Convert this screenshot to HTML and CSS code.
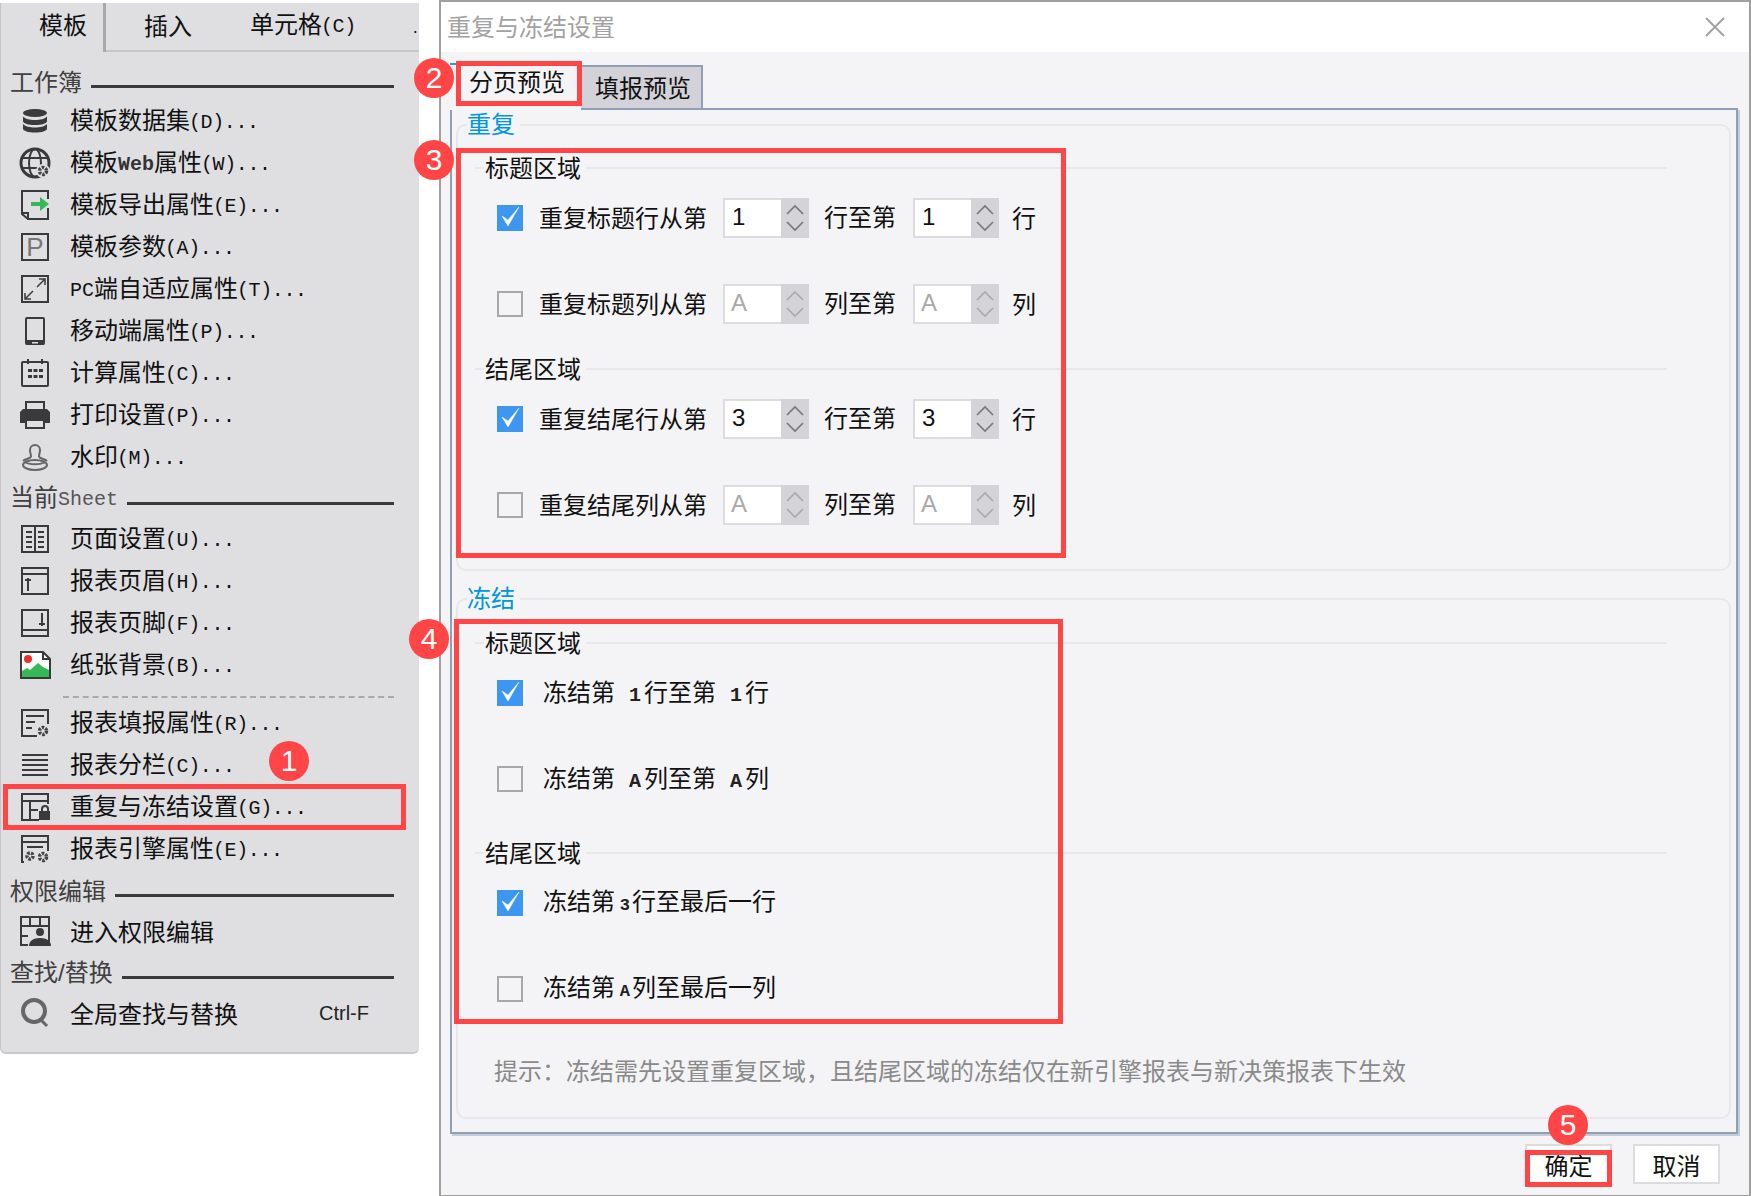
FILE: index.html
```html
<!DOCTYPE html>
<html lang="zh-CN">
<head>
<meta charset="utf-8">
<title>重复与冻结设置</title>
<link rel="stylesheet" href="styles.css">
</head>
<body>
<div class="desk">
  <nav class="menu">
    <div class="menu-tabs">
      <div class="tab tab-on">模板</div>
      <div class="tab tab-a">插入</div>
      <div class="tab tab-b">单元格<span class="lat">(C)</span></div>
      <div class="tab tab-c">.</div>
    </div>

    <div class="head head-first"><span>工作簿</span><i></i></div>
    <div class="item"><svg class="ico" viewBox="0 0 32 32"><ellipse class="fd" cx="16" cy="8" rx="12" ry="4"/><path class="fd" d="M4 11.5c2 2.5 7 3.5 12 3.5s10-1 12-3.5V16c0 2.500-5.400 4-12 4S4 18.500 4 16z"/><path class="fd" d="M4 19c2 2.500 7 3.500 12 3.500s10-1 12-3.500v4.500c0 2.500-5.400 4-12 4s-12-1.500-12-4z"/></svg><span>模板数据集<span class="lat">(D)...</span></span></div>
    <div class="item"><svg class="ico" viewBox="0 0 32 32"><circle class="ln ln3" cx="16" cy="16" r="14"/><ellipse class="ln" cx="16" cy="16" rx="6" ry="14"/><path class="ln" d="M3 11h26M3 21h16"/><circle class="bg" cx="24" cy="24" r="7"/><circle class="gear" cx="24" cy="24" r="3.500"/></svg><span>模板<span class="lat lat-b">Web</span>属性<span class="lat">(W)...</span></span></div>
    <div class="item"><svg class="ico" viewBox="0 0 32 32"><path class="ln" d="M29 10V2H3v23l6 5h20V19"/><path class="ln" d="M3 24h6v6"/><path class="grn" d="M12 13h9V8l9 7-9 7v-5h-9z"/></svg><span>模板导出属性<span class="lat">(E)...</span></span></div>
    <div class="item"><svg class="ico" viewBox="0 0 32 32"><rect class="ln" x="3" y="3" width="26" height="26"/><text class="ico-t" x="16" y="25">P</text></svg><span>模板参数<span class="lat">(A)...</span></span></div>
    <div class="item"><svg class="ico" viewBox="0 0 32 32"><rect class="ln" x="3" y="3" width="26" height="26"/><path class="ln thin" d="M18 14l8-8M20 6h6v6M14 18l-8 8M6 20v6h6"/></svg><span><span class="lat lat-p">PC</span>端自适应属性<span class="lat">(T)...</span></span></div>
    <div class="item"><svg class="ico" viewBox="0 0 32 32"><rect class="ln" x="7" y="3" width="18" height="26" rx="1"/><rect class="fd" x="7" y="25" width="18" height="5"/><rect class="bg" x="13" y="27" width="6" height="1.500"/></svg><span>移动端属性<span class="lat">(P)...</span></span></div>
    <div class="item"><svg class="ico" viewBox="0 0 32 32"><rect class="ln" x="3" y="5" width="26" height="24" rx="1"/><path class="ln" d="M9 2v5M23 2v5"/><path class="fd" d="M9 12h4v3H9zM14.500 12h4v3h-4zM20 12h4v3h-4zM9 18h4v3H9zM14.500 18h4v3h-4zM20 18h4v3h-4z"/></svg><span>计算属性<span class="lat">(C)...</span></span></div>
    <div class="item"><svg class="ico" viewBox="0 0 32 32"><path class="ln" d="M7 11V3h18v8"/><path class="fd" d="M1 13l3-3h24l3 3v11h-6v-4H7v4H1z"/><rect class="ln" x="7" y="21" width="18" height="8"/></svg><span>打印设置<span class="lat">(P)...</span></span></div>
    <div class="item"><svg class="ico" viewBox="0 0 32 32"><path class="ln g" d="M12 16c0-3-1-4-1-7a5 5 0 0 1 10 0c0 3-1 4-1 7"/><path class="ln g" d="M12 16c-2 2-6 2-8 4M20 16c2 2 6 2 8 4"/><ellipse class="ln g" cx="16" cy="24" rx="12" ry="5"/><path class="ln g" d="M6 21c4 3 16 3 20 0"/></svg><span>水印<span class="lat">(M)...</span></span></div>

    <div class="head"><span>当前<span class="lat lat-h">Sheet</span></span><i></i></div>
    <div class="item"><svg class="ico" viewBox="0 0 32 32"><rect class="ln" x="3" y="3" width="26" height="26"/><path class="ln" d="M16 3v26M7 9h6M7 14h6M7 19h6M7 24h6M19 9h6M19 14h6M19 19h6M19 24h6"/></svg><span>页面设置<span class="lat">(U)...</span></span></div>
    <div class="item"><svg class="ico" viewBox="0 0 32 32"><rect class="ln" x="3" y="3" width="26" height="26"/><path class="ln" d="M3 9h26M9 26V13M6 15h6"/></svg><span>报表页眉<span class="lat">(H)...</span></span></div>
    <div class="item"><svg class="ico" viewBox="0 0 32 32"><rect class="ln" x="3" y="3" width="26" height="26"/><path class="ln" d="M3 23h26M23 6v13M20 17h6"/></svg><span>报表页脚<span class="lat">(F)...</span></span></div>
    <div class="item"><svg class="ico" viewBox="0 0 32 32"><path class="wht" d="M2 3h22l7 7v19H2z"/><path class="ln" d="M2 3h22l7 7v19H2zM24 3v7h7"/><path class="grn" d="M3 28v-6l5-3 3 2 8-7 5 4 6 3v7z"/><circle class="red" cx="9" cy="10" r="4"/></svg><span>纸张背景<span class="lat">(B)...</span></span></div>

    <div class="sep"></div>

    <div class="item"><svg class="ico" viewBox="0 0 32 32"><path class="ln" d="M18 29H3V3h26v14"/><path class="ln" d="M7 9h18M7 15h9M7 21h6"/><circle class="gear" cx="24" cy="24" r="3.500"/></svg><span>报表填报属性<span class="lat">(R)...</span></span></div>
    <div class="item"><svg class="ico" viewBox="0 0 32 32"><path class="ln" d="M3 6h26M3 11h26M3 16h26M3 21h26M3 26h26"/></svg><span>报表分栏<span class="lat">(C)...</span></span></div>
    <div class="item"><svg class="ico" viewBox="0 0 32 32"><path class="ln" d="M29 13V3H3v26h17"/><path class="ln" d="M3 10h26M11 10v19M11 19h8"/><path class="ln" d="M23 20v-2a3 3 0 0 1 6 0v2"/><rect class="fd" x="20" y="20" width="11" height="9"/></svg><span>重复与冻结设置<span class="lat">(G)...</span></span></div>
    <div class="item"><svg class="ico" viewBox="0 0 32 32"><path class="ln" d="M5 29H3V3h26v15"/><path class="ln" d="M3 9h26M8 14h16"/><circle class="gear" cx="11" cy="23" r="3"/><circle class="gear" cx="24" cy="24" r="3.500"/></svg><span>报表引擎属性<span class="lat">(E)...</span></span></div>

    <div class="head"><span>权限编辑</span><i></i></div>
    <div class="item"><svg class="ico" viewBox="0 0 32 32"><path class="ln" d="M9 30H2V2h28v28M2 11h28M2 21h7M11 2v9M21 2v9"/><circle class="fd" cx="21" cy="17" r="4"/><path class="fd" d="M10 31c0-5 4-8 11-8s11 3 11 8z"/></svg><span>进入权限编辑</span></div>

    <div class="head"><span>查找<span class="lat lat-s">/</span>替换</span><i></i></div>
    <div class="item item-last"><svg class="ico" viewBox="0 0 32 32"><circle class="ln ln4 g" cx="15" cy="14" r="11"/><path class="ln ln3 g" d="M22 23l6 6"/></svg><span class="grow">全局查找与替换</span><span class="key">Ctrl-F</span></div>
  </nav>

  <section class="dialog">
    <header class="title"><span>重复与冻结设置</span>
      <svg class="close" viewBox="0 0 20 20"><path d="M1 1l18 18M19 1L1 19"/></svg>
    </header>
    <div class="body">
      <div class="dtabs">
        <div class="dtab dtab-on">分页预览</div>
        <div class="dtab">填报预览</div>
      </div>
      <div class="pane">
        <fieldset class="group">
          <legend>重复</legend>
          <div class="sub">
            <div class="sub-head"><span>标题区域</span></div>
            <div class="row">
              <span class="box on"><svg viewBox="0 0 26 26"><path d="M5 11l6 10L22 2 11 15z"/></svg></span>
              <span class="lab">重复标题行从第</span>
              <span class="spin"><span class="val">1</span><span class="arrows"><svg viewBox="0 0 26 36"><path d="M5 14l8-8 8 8M5 22l8 8 8-8"/></svg></span></span>
              <span class="to">行至第</span>
              <span class="spin"><span class="val">1</span><span class="arrows"><svg viewBox="0 0 26 36"><path d="M5 14l8-8 8 8M5 22l8 8 8-8"/></svg></span></span>
              <span class="tail">行</span>
            </div>
            <div class="row">
              <span class="box"></span>
              <span class="lab">重复标题列从第</span>
              <span class="spin off"><span class="val">A</span><span class="arrows"><svg viewBox="0 0 26 36"><path d="M5 14l8-8 8 8M5 22l8 8 8-8"/></svg></span></span>
              <span class="to">列至第</span>
              <span class="spin off"><span class="val">A</span><span class="arrows"><svg viewBox="0 0 26 36"><path d="M5 14l8-8 8 8M5 22l8 8 8-8"/></svg></span></span>
              <span class="tail">列</span>
            </div>
          </div>
          <div class="sub sub-2">
            <div class="sub-head"><span>结尾区域</span></div>
            <div class="row">
              <span class="box on"><svg viewBox="0 0 26 26"><path d="M5 11l6 10L22 2 11 15z"/></svg></span>
              <span class="lab">重复结尾行从第</span>
              <span class="spin"><span class="val">3</span><span class="arrows"><svg viewBox="0 0 26 36"><path d="M5 14l8-8 8 8M5 22l8 8 8-8"/></svg></span></span>
              <span class="to">行至第</span>
              <span class="spin"><span class="val">3</span><span class="arrows"><svg viewBox="0 0 26 36"><path d="M5 14l8-8 8 8M5 22l8 8 8-8"/></svg></span></span>
              <span class="tail">行</span>
            </div>
            <div class="row">
              <span class="box"></span>
              <span class="lab">重复结尾列从第</span>
              <span class="spin off"><span class="val">A</span><span class="arrows"><svg viewBox="0 0 26 36"><path d="M5 14l8-8 8 8M5 22l8 8 8-8"/></svg></span></span>
              <span class="to">列至第</span>
              <span class="spin off"><span class="val">A</span><span class="arrows"><svg viewBox="0 0 26 36"><path d="M5 14l8-8 8 8M5 22l8 8 8-8"/></svg></span></span>
              <span class="tail">列</span>
            </div>
          </div>
        </fieldset>

        <fieldset class="group group-2">
          <legend>冻结</legend>
          <div class="sub sub-f1">
            <div class="sub-head"><span>标题区域</span></div>
            <div class="row">
              <span class="box on"><svg viewBox="0 0 26 26"><path d="M5 11l6 10L22 2 11 15z"/></svg></span>
              <span class="flab">冻结第<span class="num">1</span>行至第<span class="num">1</span>行</span>
            </div>
            <div class="row">
              <span class="box"></span>
              <span class="flab">冻结第<span class="num">A</span>列至第<span class="num">A</span>列</span>
            </div>
          </div>
          <div class="sub sub-f2">
            <div class="sub-head"><span>结尾区域</span></div>
            <div class="row">
              <span class="box on"><svg viewBox="0 0 26 26"><path d="M5 11l6 10L22 2 11 15z"/></svg></span>
              <span class="flab">冻结第<span class="num num-s">3</span>行至最后一行</span>
            </div>
            <div class="row">
              <span class="box"></span>
              <span class="flab">冻结第<span class="num num-s">A</span>列至最后一列</span>
            </div>
          </div>
          <p class="hint">提示：冻结需先设置重复区域，且结尾区域的冻结仅在新引擎报表与新决策报表下生效</p>
        </fieldset>
      </div>
      <footer class="foot">
        <div class="btn">确定</div>
        <div class="btn">取消</div>
      </footer>
    </div>
  </section>

  <div class="mark mark-menu"></div>
  <div class="mark mark-tab"></div>
  <div class="mark mark-rep"></div>
  <div class="mark mark-frz"></div>
  <div class="mark mark-ok"></div>
  <div class="badge badge-1">1</div>
  <div class="badge badge-2">2</div>
  <div class="badge badge-3">3</div>
  <div class="badge badge-4">4</div>
  <div class="badge badge-5">5</div>
</div>
</body>
</html>
```

FILE: styles.css
```css
* { box-sizing: border-box; }
html, body { margin: 0; padding: 0; background: #fff; }
body {
  width: 1751px;
  height: 1196px;
  overflow: hidden;
  font-family: "Noto Sans CJK SC", "Liberation Sans", sans-serif;
  font-size: 24px;
  color: #111;
}
.desk { position: relative; width: 1751px; height: 1196px; display: flex; align-items: flex-start; }

/* left menu */
.menu {
  width: 419px;
  height: 1051px;
  margin-top: 3px;
  margin-right: 20px;
  flex: none;
  background: #dfdfe2;
  border-left: 1px solid #c4c4c6;
  border-bottom: 2px solid #c8c8ca;
  border-radius: 0 0 6px 6px;
  line-height: 32px;
}
.menu-tabs { display: flex; align-items: center; height: 49px; padding-bottom: 4px; border-bottom: 2px solid #c6c6c9; }
.tab { flex: none; }
.tab-on { width: 105px; height: 49px; margin-top: 4px; margin-bottom: -2px; padding: 5px 0 0 38px; background: #dfdfe2; border-right: 3px solid #a9a9ab; }
.tab-a { margin-left: 38px; }
.tab-b { margin-left: 58px; }
.tab-c { margin-left: 57px; margin-top: 4px; font-family: "Liberation Sans", sans-serif; font-size: 18px; }
.lat { font-family: "Liberation Mono", monospace; font-size: 20px; margin-left: -1px; letter-spacing: -0.400px; vertical-align: 1px; }
.lat-b, .lat-h, .lat-p { margin-left: 0; letter-spacing: 0; }
.lat-b { font-weight: 700; color: #333; }
.lat-h { color: #555; }
.lat-s { font-family: "Liberation Sans", sans-serif; font-size: 24px; margin-left: 0; letter-spacing: 0; vertical-align: 0; }

.head { display: flex; align-items: center; height: 40px; padding: 0 25px 0 9px; color: #404040; }
.head i { flex: 1; height: 3px; margin: 11px 0 0 9px; background: #3a3a3a; }
.head-first { height: 39px; margin-top: 9px; }
.item { display: flex; align-items: center; height: 42px; padding-left: 18px; color: #111; }
.item-last { padding-right: 50px; }
.ico { width: 32px; height: 32px; flex: none; margin-right: 19px; }
.grow { flex: 1; }
.key { font-family: "Liberation Sans", sans-serif; font-size: 20px; color: #222; }
.sep { height: 16px; margin: -4px 25px 4px 62px; border-bottom: 2px dashed #a9a9ab; }

.ln { fill: none; stroke: #3a3a3a; stroke-width: 2; }
.ln3 { stroke-width: 3; }
.ln4 { stroke-width: 4; }
.g { stroke: #666; }
.thin { stroke-width: 1.500; }
.fd { fill: #3a3a3a; }
.bg { fill: #dfdfe2; }
.wht { fill: #fff; }
.grn { fill: #35b957; }
.red { fill: #f02d2d; }
.gear { fill: none; stroke: #444; stroke-width: 3.500; stroke-dasharray: 2.500 1.200; }
.ico-t { font-family: "Liberation Sans", sans-serif; font-size: 26px; fill: #777; text-anchor: middle; }

/* dialog */
.dialog {
  width: 1312px;
  height: 1196px;
  flex: none;
  display: flex;
  flex-direction: column;
  background: #f4f4f6;
  border: 2px solid #a0a0a0;
  border-width: 2px 2px 1px 2px;
  line-height: 30px;
}
.title { height: 50px; flex: none; display: flex; align-items: center; justify-content: space-between; padding: 0 24px 3px 6px; background: #fff; color: #a2a2a2; }
.close { width: 20px; height: 20px; margin-top: 3px; }
.close path { fill: none; stroke: #a0a0a0; stroke-width: 1.800; }
.body { flex: 1; display: flex; flex-direction: column; padding: 9px 11px 0 9px; }
.dtabs { display: flex; align-items: flex-end; height: 47px; flex: none; }
.dtab {
  width: 122px;
  height: 44px;
  margin-bottom: -1px;
  padding: 5px 0 0 14px;
  background: #d2d2d8;
  border: 2px solid #8da0b8;
  border-bottom: 0;
  border-left: 0;
}
.dtab-on { width: 131px; height: 47px; padding: 1px 0 0 19px; background: #f4f4f6; border: 0; border-top: 2px solid #3c90ea; position: relative; z-index: 1; margin-bottom: -2px; }
.pane {
  height: 1026px;
  flex: none;
  padding: 0 5px 0 4px;
  border: 2px solid #8da0b8;
  box-shadow: 2px 2px 0 #c6ccd6;
}
.group { margin: 0; padding: 0 62px 44px 17px; border: 2px solid #e8e8ea; border-radius: 10px; min-width: 0; }
.group legend { padding: 0 5px 0 0; margin-left: -8px; color: #0096e0; line-height: 26px; height: 30px; }
.group-2 { margin-top: 13px; padding-bottom: 32px; }
.sub { padding-top: 13px; }
.sub-2 { padding-top: 30px; }
.sub-f1 { padding-top: 14px; }
.sub-f2 { padding-top: 39px; }
.sub-head { display: flex; align-items: center; height: 30px; margin-bottom: 15px; }
.sub-head span { padding-bottom: 3px; }
.sub-head::before { content: ""; width: 9px; height: 2px; background: #e8e8ea; margin-right: 1px; }
.sub-head::after { content: ""; flex: 1; height: 2px; background: #e8e8ea; margin-left: 5px; }
.row { display: flex; align-items: center; gap: 16px; height: 40px; margin-left: 22px; }
.row + .row { margin-top: 46px; }
.box { width: 26px; height: 26px; flex: none; border: 2px solid #a8a8a8; }
.box.on { background: #3d96f0; border: 0; }
.box svg { display: block; width: 26px; height: 26px; }
.box path { fill: #fff; stroke: #fff; stroke-width: 0.500; }
.lab { padding-bottom: 2px; }
.to { padding-bottom: 4px; margin: 0 1px 0 -1px; }
.spin { display: flex; width: 86px; height: 40px; flex: none; border: 2px solid #dcdce0; background: #fff; }
.val { flex: 1; padding-left: 7px; font-family: "Liberation Sans", sans-serif; font-size: 24px; line-height: 34px; color: #111; }
.off .val { padding-left: 6px; color: #a9a9a9; }
.arrows { width: 28px; flex: none; background: #d4d4d8; margin: -2px -2px -2px 0; }
.arrows svg { display: block; width: 26px; height: 36px; margin: 2px 0 0 1px; }
.arrows path { fill: none; stroke: #777; stroke-width: 1.600; }
.off .arrows path { stroke: #a9a9a9; }
.tail { margin-left: -3px; padding-bottom: 2px; }
.flab { margin-left: 4px; display: inline-block; white-space: nowrap; }
.num { display: inline-block; width: 29px; padding-right: 3px; text-align: right; font-family: "Liberation Mono", monospace; font-size: 20px; font-weight: 700; color: #222; }
.num-s { width: 17px; padding-right: 2px; font-size: 17px; }
.hint { margin: 46px 0 0 19px; color: #8a8a8a; line-height: 30px; }
.foot { display: flex; justify-content: flex-end; gap: 21px; padding: 10px 18px 0 0; }
.btn { width: 87px; height: 40px; border: 2px solid #dcdce0; background: #fff; text-align: center; line-height: 38px; color: #111; }

/* annotations */
.mark { position: absolute; z-index: 2; border: 5px solid #ff4545; }
.mark-menu { left: 3px; top: 784px; width: 403px; height: 46px; }
.mark-tab { left: 456px; top: 61px; width: 126px; height: 45px; }
.mark-rep { left: 456px; top: 148px; width: 610px; height: 410px; }
.mark-frz { left: 454px; top: 619px; width: 609px; height: 405px; }
.mark-ok { left: 1525px; top: 1150px; width: 87px; height: 37px; }
.badge {
  position: absolute;
  z-index: 3;
  width: 40px;
  height: 40px;
  border-radius: 50%;
  background: #ff4545;
  color: #fff;
  font-family: "Liberation Sans", sans-serif;
  font-size: 30px;
  line-height: 40px;
  text-align: center;
}
.badge-1 { left: 269px; top: 741px; }
.badge-2 { left: 414px; top: 58px; }
.badge-3 { left: 414px; top: 140px; }
.badge-4 { left: 409px; top: 619px; }
.badge-5 { left: 1548px; top: 1105px; }
```
